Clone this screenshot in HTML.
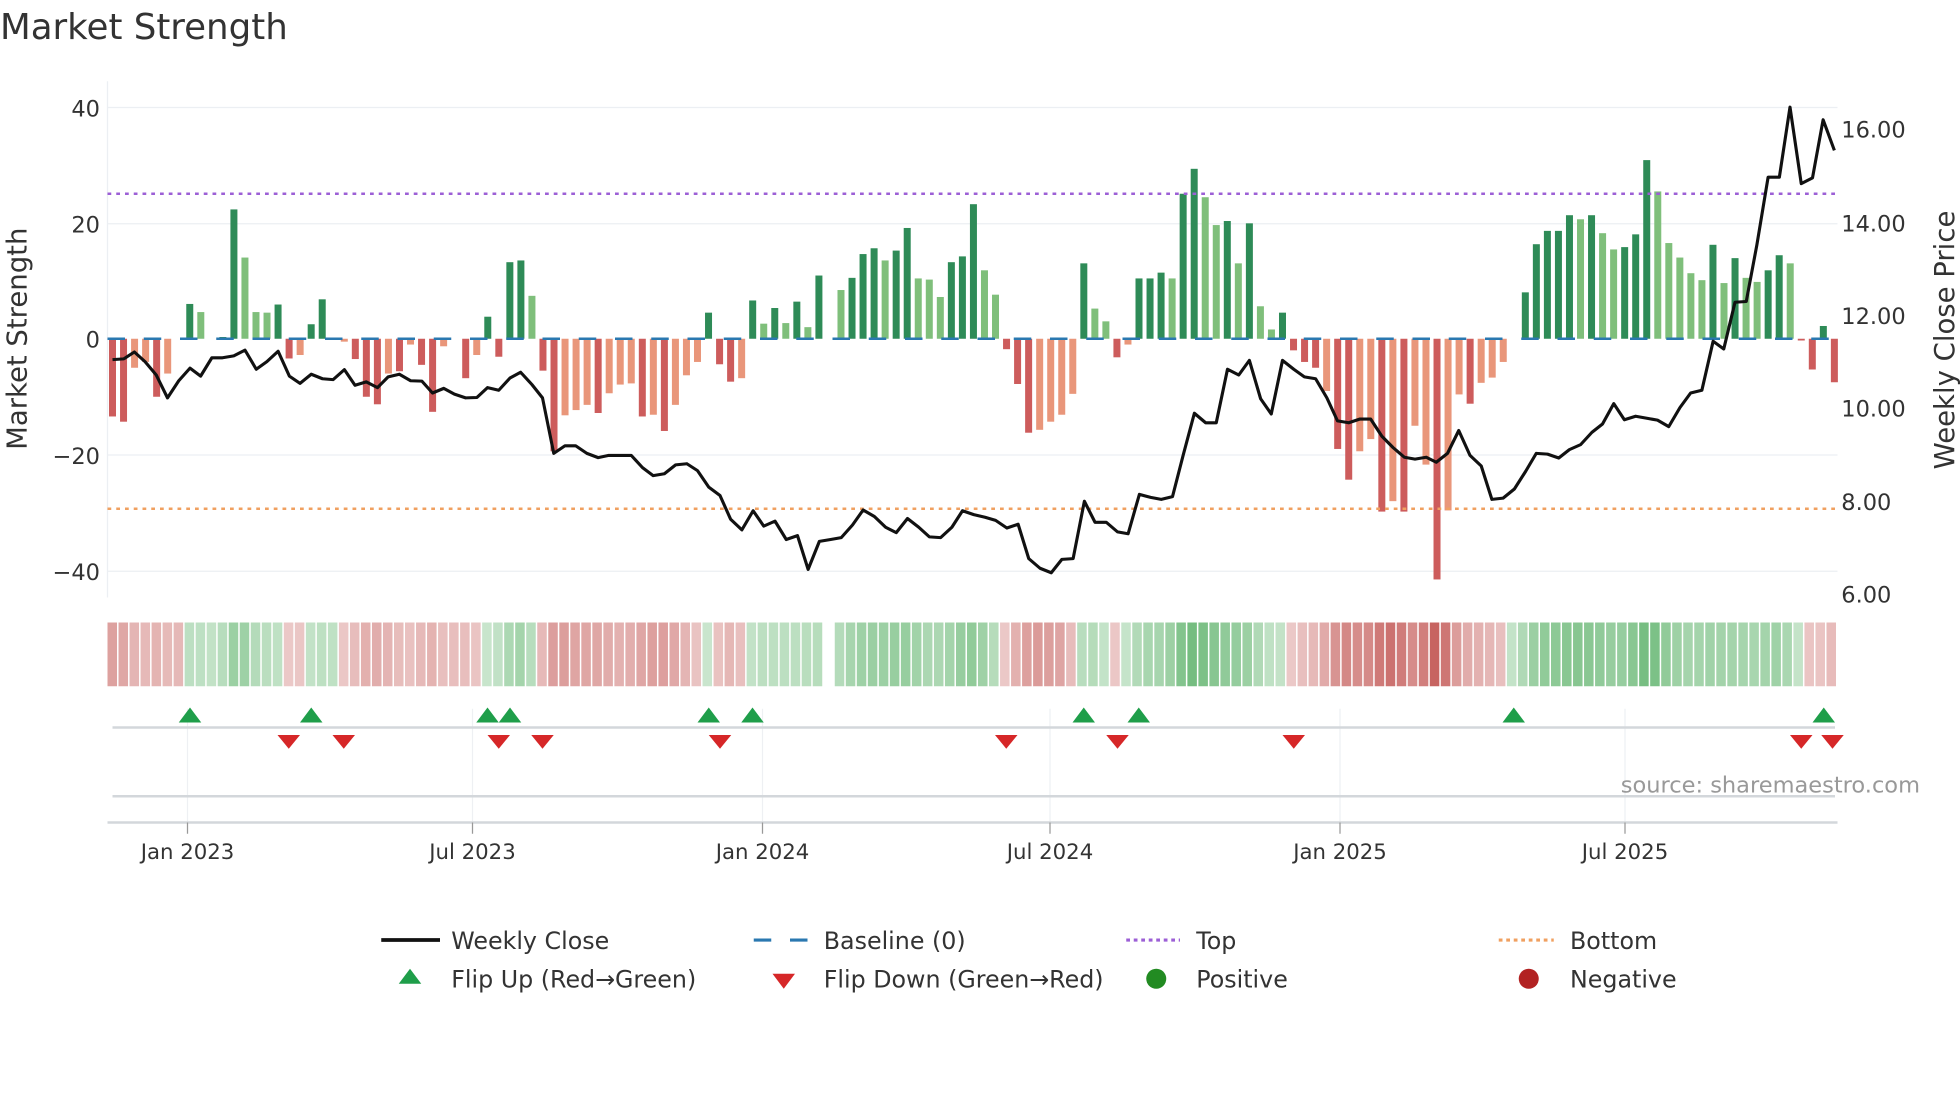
<!DOCTYPE html>
<html><head><meta charset="utf-8"><style>
html,body{margin:0;padding:0;background:#fff;width:1960px;height:1102px;overflow:hidden}
svg text{font-family:"DejaVu Sans","Liberation Sans",sans-serif;fill:#333}
</style></head><body>
<svg id="s" width="1960" height="1102" viewBox="0 0 1568 881.6" xmlns="http://www.w3.org/2000/svg">
<text x="0" y="31" font-size="28.5">Market Strength</text>
<g stroke="#eceff3" stroke-width="1">
<line x1="86" x2="1470" y1="86" y2="86"/><line x1="86" x2="1470" y1="179" y2="179"/>
<line x1="86" x2="1470" y1="364" y2="364"/><line x1="86" x2="1470" y1="457" y2="457"/>
<line x1="86" x2="86" y1="65" y2="478"/>
</g>
<g font-size="18" text-anchor="end">
<text x="80" y="93">40</text><text x="80" y="186">20</text><text x="80" y="278">0</text>
<text x="80" y="371">−20</text><text x="80" y="464">−40</text>
</g>
<g font-size="18">
<text x="1473" y="110">16.00</text><text x="1473" y="185">14.00</text><text x="1473" y="259">12.00</text>
<text x="1473" y="333">10.00</text><text x="1473" y="408">8.00</text><text x="1473" y="482">6.00</text>
</g>
<text transform="translate(21,271) rotate(-90)" font-size="22" text-anchor="middle">Market Strength</text>
<text transform="translate(1563,272) rotate(-90)" font-size="22" text-anchor="middle">Weekly Close Price</text>
<g id="bars"></g>
<line x1="86" x2="1470" y1="271" y2="271" stroke="#2a78b0" stroke-width="2" stroke-dasharray="14 15"/>
<line x1="86" x2="1470" y1="155" y2="155" stroke="#9c5fd6" stroke-width="2" stroke-dasharray="3 4"/>
<line x1="86" x2="1470" y1="407" y2="407" stroke="#f0a060" stroke-width="2" stroke-dasharray="3 4"/>
<polyline id="pl" fill="none" stroke="#111" stroke-width="2.5" stroke-linejoin="round"/>
<g id="strip"></g>
<g stroke="#eef0f3" stroke-width="1">
<line x1="150" x2="150" y1="567" y2="658"/><line x1="378" x2="378" y1="567" y2="658"/>
<line x1="610" x2="610" y1="567" y2="658"/><line x1="840" x2="840" y1="567" y2="658"/>
<line x1="1072" x2="1072" y1="567" y2="658"/><line x1="1300" x2="1300" y1="567" y2="658"/>
</g>
<line x1="90" x2="1468" y1="582" y2="582" stroke="#d3d7db" stroke-width="2"/>
<line x1="90" x2="1468" y1="637" y2="637" stroke="#d3d7db" stroke-width="2"/>
<line x1="86" x2="1470" y1="658" y2="658" stroke="#d3d7db" stroke-width="2"/>
<g stroke="#999" stroke-width="1">
<line x1="150" x2="150" y1="658" y2="667"/><line x1="378" x2="378" y1="658" y2="667"/>
<line x1="610" x2="610" y1="658" y2="667"/><line x1="840" x2="840" y1="658" y2="667"/>
<line x1="1072" x2="1072" y1="658" y2="667"/><line x1="1300" x2="1300" y1="658" y2="667"/>
</g>
<g id="mk"></g>
<g font-size="17" text-anchor="middle">
<text x="150" y="687">Jan 2023</text><text x="378" y="687">Jul 2023</text><text x="610" y="687">Jan 2024</text>
<text x="840" y="687">Jul 2024</text><text x="1072" y="687">Jan 2025</text><text x="1300" y="687">Jul 2025</text>
</g>
<text x="1536" y="634" font-size="18" text-anchor="end" style="fill:#999">source: sharemaestro.com</text>
<g font-size="19">
<line x1="305" x2="352" y1="752" y2="752" stroke="#111" stroke-width="3"/>
<text x="361" y="759">Weekly Close</text>
<line x1="603" x2="646" y1="752" y2="752" stroke="#2a78b0" stroke-width="2.5" stroke-dasharray="14 15"/>
<text x="659" y="759">Baseline (0)</text>
<line x1="901" x2="944" y1="752" y2="752" stroke="#9c5fd6" stroke-width="2.5" stroke-dasharray="3 3"/>
<text x="957" y="759">Top</text>
<line x1="1199" x2="1243" y1="752" y2="752" stroke="#f0a060" stroke-width="2.5" stroke-dasharray="3 3"/>
<text x="1256" y="759">Bottom</text>
<polygon points="328,775 337,787 319,787" fill="#1f9e4a"/>
<text x="361" y="790">Flip Up (Red→Green)</text>
<polygon points="618,779 636,779 627,791" fill="#d62728"/>
<text x="659" y="790">Flip Down (Green→Red)</text>
<circle cx="925" cy="783" r="8" fill="#228b22"/>
<text x="957" y="790">Positive</text>
<circle cx="1223" cy="783" r="8" fill="#b22222"/>
<text x="1256" y="790">Negative</text>
</g>
</svg>
<script>
var raw="-13.4d,-14.3d,-5l,-4l,-10d,-6l,0l,6d,4.6l,0l,0.3d,22.3d,14l,4.6l,4.5l,5.9d,-3.4d,-2.8l,2.5d,6.8d,0l,-0.5l,-3.5d,-10d,-11.3d,-6l,-5.6d,-1l,-4.5d,-12.6d,-1.3l,0l,-6.8d,-2.8l,3.8d,-3.1d,13.2d,13.5d,7.4l,-5.5d,-19.4d,-13.2l,-12.3l,-11.4l,-12.8d,-9.4l,-7.9l,-7.7l,-13.4d,-13.1l,-15.9d,-11.4l,-6.3l,-4l,4.5d,-4.4d,-7.4d,-6.8l,6.6d,2.6l,5.3d,2.7l,6.4d,2l,10.9d,0l,8.4l,10.5d,14.6d,15.6d,13.5l,15.2d,19.1d,10.4l,10.2l,7.2l,13.2d,14.2d,23.2d,11.8l,7.6l,-1.8d,-7.8d,-16.2d,-15.7l,-14.3l,-13.1l,-9.5l,13d,5.2l,3l,-3.2d,-1l,10.4d,10.4d,11.4d,10.4l,25d,29.3d,24.4l,19.6l,20.3d,13l,19.9d,5.6l,1.6l,4.5d,-2d,-4d,-5d,-9l,-19d,-24.3d,-19.4l,-17.3l,-29.8d,-28l,-29.8d,-15l,-21.7l,-41.5d,-29.6l,-9.6l,-11.2d,-7.6l,-6.7l,-4l,0l,8d,16.3d,18.6d,18.6d,21.3d,20.6l,21.3d,18.2l,15.4l,15.8d,18d,30.8d,25.4l,16.5l,14l,11.3l,10.1l,16.2d,9.6l,13.9d,10.5l,9.8l,11.8d,14.4d,13l,-0.3d,-5.3d,2.2d,-7.5d".split(",");
var N=raw.length,step=(1467.5-90)/(N-1),ns="http://www.w3.org/2000/svg";
var vals=raw.map(parseFloat);
var bars=document.getElementById("bars"),strip=document.getElementById("strip");
function mix(c,t){return "rgb("+c.map(function(v){return Math.round(255+(v-255)*t)}).join(",")+")";}
for(var i=0;i<N;i++){var v=vals[i],dk=raw[i].slice(-1)=="d",x=90+i*step;
 if(v!=0){var r=document.createElementNS(ns,"rect");var h=Math.abs(v)*4.64;
 r.setAttribute("x",x-2.8);r.setAttribute("width",5.6);r.setAttribute("y",v>0?271-h:271);r.setAttribute("height",h);
 r.setAttribute("fill",v>0?(dk?"#2e8b57":"#7fbf7b"):(dk?"#cd5c5c":"#e9967a"));bars.appendChild(r);}
 if(i==65)continue;
 var a=vals[Math.max(0,i-1)],b=vals[Math.min(N-1,i+1)];var sv=v!=0?(v*2+a+b)/4:(a+b)/2;
 if(sv==0)sv=v||a||b||-1;
 var c=document.createElementNS(ns,"rect");var t=Math.min(1,0.3+Math.abs(sv)/40*0.7);
 c.setAttribute("x",86+i*(1384/N));c.setAttribute("width",1384/N-1.2);c.setAttribute("y",498);c.setAttribute("height",51);
 c.setAttribute("fill",sv>0?mix([76,170,90],t):mix([192,80,77],t));strip.appendChild(c);}
var z1=[[180,940],[198,938],[215,920],[232,945],[250,980],[268,1040],[286,995],[304,962],[321,983],[339,935],[356,935],[374,930],[392,915],[410,965],[427,945],[445,918],[463,983],[480,1002],[498,978],[516,990],[533,992],[551,966],[568,1007],[586,998],[604,1013],[621,985],[639,978],[657,995],[675,996],[692,1027],[710,1015],[727,1030],[745,1040],[763,1039],[780,1013],[798,1020],[816,988],[833,973],[851,1005],[868,1040],[886,1185],[904,1165],[921,1165],[939,1185],[957,1196],[974,1190],[992,1190],[1010,1190],[1028,1222],[1045,1243],[1063,1238],[1081,1215],[1099,1212],[1116,1230],[1134,1273],[1152,1295],[1169,1357],[1187,1385],[1205,1335],[1222,1375],[1240,1362],[1258,1410],[1276,1400],[1293,1488],[1311,1415],[1329,1410],[1346,1405],[1364,1372],[1381,1333],[1399,1350],[1417,1378],[1434,1392],[1452,1355],[1470,1378],[1487,1403],[1505,1405],[1523,1378],[1540,1335],[1558,1345]];
var z2=[[8,1352],[25,1360],[43,1380],[61,1370],[78,1460],[96,1485],[114,1497],[131,1462],[149,1460],[167,1310],[184,1365],[202,1365],[220,1390],[237,1395],[255,1292],[273,1300],[290,1305],[308,1298],[325,1190],[343,1080],[361,1105],[378,1105],[396,965],[414,980],[431,942],[449,1042],[466,1082],[484,942],[502,965],[519,985],[537,990],[555,1040],[572,1100],[590,1105],[608,1095],[625,1095],[643,1140],[661,1170],[679,1195],[696,1200],[714,1195],[730,1208],[748,1185],[766,1125],[784,1190],[802,1218],[819,1305],[837,1302],[855,1278],[873,1232],[890,1185],[908,1187],[926,1197],[943,1175],[961,1162],[979,1130],[996,1108],[1014,1055],[1031,1097],[1049,1088],[1067,1093],[1084,1098],[1102,1115],[1120,1065],[1137,1027],[1155,1020],[1173,892],[1190,912],[1208,790],[1226,788],[1243,640],[1261,463],[1279,463],[1296,280],[1314,480],[1332,465],[1349,313],[1367,393]];
var ys=0.3061;
var pts=z1.map(function(p){return (p[0]/2)+","+(p[1]*ys).toFixed(1)}).concat(z2.map(function(p){return (784+p[0]/2)+","+(p[1]*ys).toFixed(1)}));
document.getElementById("pl").setAttribute("points",pts.join(" "));
var mk=document.getElementById("mk"),h="";
[152,249,390,408,567,602,867,911,1211,1459].forEach(function(x){h+='<polygon points="'+x+',566 '+(x+9)+',578 '+(x-9)+',578" fill="#1f9e4a"/>';});
[231,275,399,434,576,805,894,1035,1441,1466].forEach(function(x){h+='<polygon points="'+(x-9)+',588 '+(x+9)+',588 '+x+',599" fill="#d62728"/>';});
mk.innerHTML=h;
</script>
</body></html>
